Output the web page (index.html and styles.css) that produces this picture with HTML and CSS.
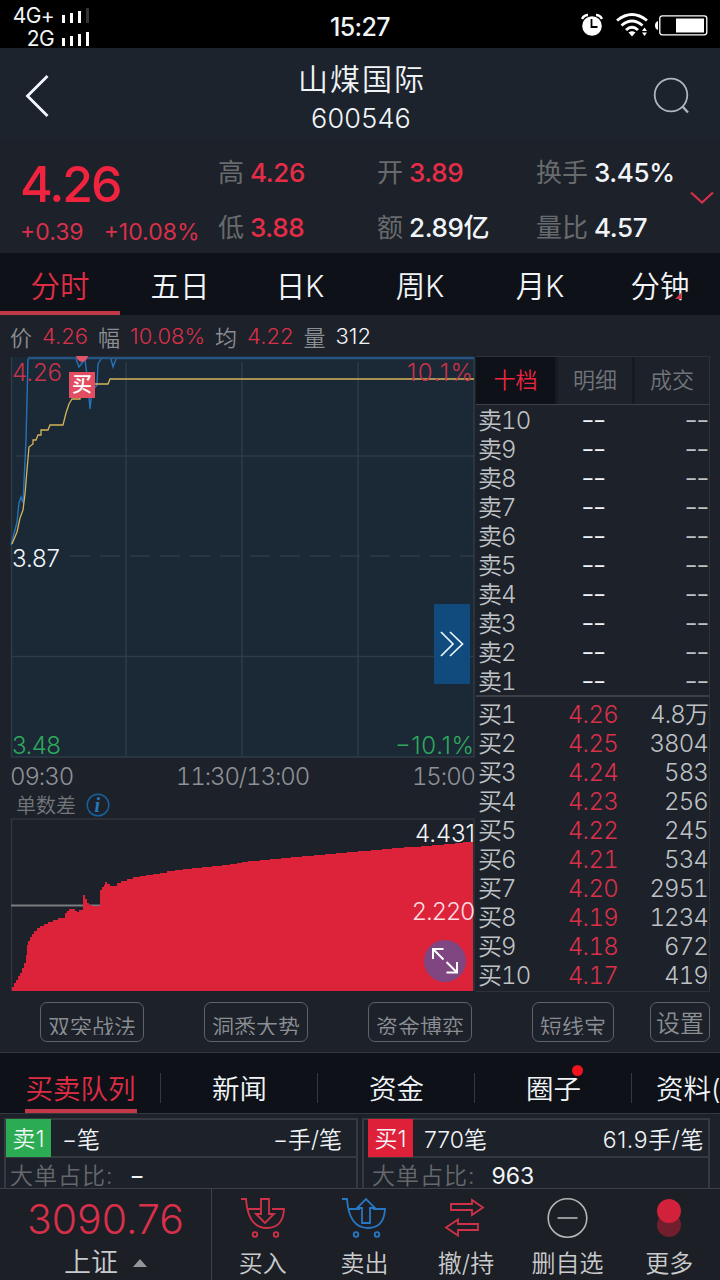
FILE: index.html
```html
<!DOCTYPE html>
<html lang="zh-CN">

<head>
    <meta charset="utf-8">
    <meta name="viewport" content="width=device-width, initial-scale=1">
    <title>山煤国际 600546</title>
    <link rel="stylesheet" href="styles.css">
</head>

<body>

    <div class="status">
        <div class="signals">
            <div class="signal">
                <span>4G+</span>
                <svg width="28" height="15"><path fill="#fff" d="M0 7h3v8h-3zM8 5h3v10h-3zM16 3h3v12h-3z"/><path fill="#333" d="M24 0h3v15h-3z"/></svg>
            </div>
            <div class="signal">
                <span>2G</span>
                <svg width="28" height="15"><path fill="#fff" d="M0 7h3v8h-3zM8 5h3v10h-3zM16 3h3v12h-3zM24 1h3v14h-3z"/></svg>
            </div>
        </div>
        <div class="clock">15:27</div>
        <div class="status_icons">
            <svg width="22" height="24" viewBox="0 0 22 24">
                <path d="M1 6Q3 2 7 2M15 2Q19 2 21 6" fill="none" stroke="#fff" stroke-width="2.4"/>
                <circle cx="11" cy="13" r="9.8" fill="#fff"/>
                <path d="M10.500 6v8h6" fill="none" stroke="#000" stroke-width="1.800"/>
            </svg>
            <svg class="wifi" width="32" height="24" viewBox="0 0 32 24">
                <path d="M1 7.500Q16 -4.500 31 7.500M5.500 12.500Q16 3.500 26.500 12.500M10 17Q16 11.500 22 17" fill="none" stroke="#fff" stroke-width="2.800"/>
                <path d="M12.500 19.500Q16 17 19.500 19.500L16 23.500zM26 18l2.500-3.500 2.500 3.500zM26 19.500h5l-2.500 3.500z" fill="#fff"/>
            </svg>
            <svg class="battery" width="53" height="21" viewBox="0 0 53 21">
                <rect x="4.800" y=".8" width="47" height="19" rx="2.500" fill="none" stroke="#fff" stroke-width="1.300"/>
                <path d="M3 6v9Q0 14 0 10.500T3 6zM21 3.500h28v14h-28z" fill="#fff"/>
            </svg>
        </div>
    </div>

    <div class="header">
        <svg width="30" height="48" viewBox="0 0 30 48"><path d="M25.500 4L5.500 24l20 20" fill="none" stroke="#f2f8fb" stroke-width="2.800"/></svg>
        <div class="title">
            <div class="stock_name">山煤国际</div>
            <div class="stock_code">600546</div>
        </div>
        <svg width="38" height="38" viewBox="0 0 38 38"><path d="M29.500 29.500l5.500 6" stroke="#aeb6bc" stroke-width="2.400"/><circle cx="18" cy="18" r="16.300" fill="none" stroke="#aeb6bc" stroke-width="1.800"/></svg>
    </div>

    <div class="quote">
        <div class="price">
            <div class="last">4.26</div>
            <div class="change"><span>+0.39</span><span>+10.08%</span></div>
        </div>
        <div class="stat">高<b class="red">4.26</b></div>
        <div class="stat">开<b class="red">3.89</b></div>
        <div class="stat">换手<b>3.45%</b></div>
        <div class="stat">低<b class="red">3.88</b></div>
        <div class="stat">额<b>2.89亿</b></div>
        <div class="stat">量比<b>4.57</b></div>
        <svg class="expand" width="26" height="14"><path d="M1 1.500l11 10 11-10" fill="none" stroke="#d8304a" stroke-width="2.200"/></svg>
    </div>

    <div class="period">
        <div class="active">分时</div>
        <div>五日</div>
        <div>日K</div>
        <div>周K</div>
        <div>月K</div>
        <div>分钟<i class="corner"></i></div>
    </div>

    <div class="info">
        <span>价</span><span class="red">4.26</span><span>幅</span><span class="red">10.08%</span><span>均</span><span class="red">4.22</span><span>量</span><span class="white">312</span>
    </div>

    <div class="main">
        <div class="charts">

            <!-- intraday price, blue = price, yellow = average -->
            <svg class="chart" width="466" height="402" viewBox="10 356 466 402">
                <rect x="11" y="357" width="463" height="400" fill="#1b2836"/>
                <g stroke="#2f3b46" stroke-width="1.500">
                    <path d="M11.500 357v400M126 362v395M242 362v395M358 362v395M474 357v400"/>
                    <path d="M16 456h458M11 656.500h463M11 757h463"/>
                    <path d="M70 556h404" stroke-dasharray="20 10"/>
                </g>
                <path d="M28 358H474" stroke="#265584" stroke-width="2.500"/>
                <path d="M11 545L17 522L19 503L21 497L23 503L26 440L28 359M76 359L79 367L82 363L85 359L88 385L90 409L92 391L97 385L98 364L101 359M111 359L113 367L116 359" fill="none" stroke="#2473b9" stroke-width="1.400"/>
                <path d="M12 544L17 532L20 518L23 510L25 494L27 470L29 447L33 444V440H36L38 435H41V430H48L50 425H63L66 413L69 404L72 399H80V391L85 384H108L110 379H474" fill="none" stroke="#d5b45b" stroke-width="1.300"/>
                <path d="M76 356Q77 361 82 362Q87 361 88 356z" fill="#e35468"/>
                <rect x="69" y="372" width="26" height="26" fill="#e34d62"/>
                <text x="72" y="392" class="tag">买</text>
                <text x="12" y="381" textLength="50" class="t_red">4.26</text>
                <text x="407" y="381" textLength="66" class="t_red">10.1%</text>
                <text x="12" y="567" textLength="48" class="t_white">3.87</text>
                <text x="12" y="754" textLength="49" class="t_green">3.48</text>
                <text x="395" y="754" textLength="79" class="t_green">−10.1%</text>
                <rect x="434" y="604" width="36" height="80" fill="#114a7c"/>
                <path d="M441 632l12 12-12 12M450 632l12.500 12-12.500 12" fill="none" stroke="#e8f8ff" stroke-width="1.700"/>
            </svg>

            <div class="times"><span>09:30</span><span>11:30/13:00</span><span>15:00</span></div>

            <div class="indicator">单数差
                <svg width="24" height="24"><circle cx="12" cy="12" r="10.800" fill="none" stroke="#185e99" stroke-width="1.500"/><text x="8.500" y="18.500" class="t_info">i</text></svg>
            </div>

            <svg class="chart" width="466" height="174" viewBox="10 818 466 174">
                <path d="M11.500 991V819H474V991" fill="none" stroke="#30363d" stroke-width="1.500"/>
                <path d="M11 905.500h90" stroke="#7a7d81" stroke-width="1.800"/>
                <path d="M12 991V987H14V983H16V980H18V976H20V973H22V968H24V963H26V955H27V945H28V941H30V937H32V934H34V931H37V928H40V926H44V924H48V922H53V920H58V918H65V913H67V911H69V909H75V911H77V912H79V910H83V895H85V899H87V903H89V905H92V906H100V890H102V887H104V885H105V882H107V884H110V886H117V883H121V881H127V879H133V877H140V876H146V875H153V874H160V873H167V871H175V870H183V869H192V868H202V867H212V866H222V865H230V864H237V863H242V862H248V861H260V860H270V859H281V858H291V857H302V856H314V855H325V854H336V853H347V852H358V851H371V850H382V849H392V848H404V847H421V846H432V845H444V844H455V843H463V842H473V991z" fill="#dc233a"/>
                <text x="415" y="842" textLength="60" class="t_white">4.431</text>
                <text x="412" y="920" textLength="63" class="t_pink">2.220</text>
                <circle cx="445" cy="961" r="21" fill="#7f4681"/>
                <path d="M443.500 959.500L433 949M433 959V949h10.500M446.500 962l10 10M457 962v10.500h-10.500" fill="none" stroke="#fff" stroke-width="2"/>
            </svg>
        </div>

        <div class="book">
            <div class="book_tabs"><div class="active">十档</div><div>明细</div><div>成交</div></div>
            <div class="sell">
                <div class="row"><span>卖10</span><span>−−</span><span>−−</span></div>
                <div class="row"><span>卖9</span><span>−−</span><span>−−</span></div>
                <div class="row"><span>卖8</span><span>−−</span><span>−−</span></div>
                <div class="row"><span>卖7</span><span>−−</span><span>−−</span></div>
                <div class="row"><span>卖6</span><span>−−</span><span>−−</span></div>
                <div class="row"><span>卖5</span><span>−−</span><span>−−</span></div>
                <div class="row"><span>卖4</span><span>−−</span><span>−−</span></div>
                <div class="row"><span>卖3</span><span>−−</span><span>−−</span></div>
                <div class="row"><span>卖2</span><span>−−</span><span>−−</span></div>
                <div class="row"><span>卖1</span><span>−−</span><span>−−</span></div>
            </div>
            <div class="buy">
                <div class="row"><span>买1</span><span>4.26</span><span>4.8万</span></div>
                <div class="row"><span>买2</span><span>4.25</span><span>3804</span></div>
                <div class="row"><span>买3</span><span>4.24</span><span>583</span></div>
                <div class="row"><span>买4</span><span>4.23</span><span>256</span></div>
                <div class="row"><span>买5</span><span>4.22</span><span>245</span></div>
                <div class="row"><span>买6</span><span>4.21</span><span>534</span></div>
                <div class="row"><span>买7</span><span>4.20</span><span>2951</span></div>
                <div class="row"><span>买8</span><span>4.19</span><span>1234</span></div>
                <div class="row"><span>买9</span><span>4.18</span><span>672</span></div>
                <div class="row"><span>买10</span><span>4.17</span><span>419</span></div>
            </div>
        </div>
    </div>

    <div class="tools">
        <button><span>双突战法</span></button>
        <button><span>洞悉大势</span></button>
        <button><span>资金博弈</span></button>
        <button class="short"><span>短线宝</span></button>
        <button class="settings">设置</button>
    </div>

    <div class="sections">
        <div class="active"><span>买卖队列</span></div>
        <div>新闻</div>
        <div>资金</div>
        <div><span class="dot">圈子</span></div>
        <div class="cut">资料(F10)</div>
    </div>

    <div class="queue">
        <div class="side side_sell">
            <div class="queue_top"><span class="badge green_bg">卖1</span><span>−笔</span><span class="avg">−手/笔</span></div>
            <div class="queue_sub">大单占比:<span>−</span></div>
        </div>
        <div class="side side_buy">
            <div class="queue_top"><span class="badge red_bg">买1</span><span>770笔</span><span class="avg">61.9手/笔</span></div>
            <div class="queue_sub">大单占比:<span>963</span></div>
        </div>
    </div>

    <div class="bottom">
        <div class="index">
            <div class="index_value">3090.76</div>
            <div class="index_name">上证<i class="up"></i></div>
        </div>
        <div class="action">
            <svg width="44" height="42" viewBox="0 0 44 42" fill="none" stroke="#cf3248" stroke-width="1.800">
                <path d="M1 2h5q2 29 21 29 16 0 17-19h-12M8 12h12" transform="translate(-1 0)"/>
                <path d="M20 2h8v15h5l-9 9-9-9h5z"/>
                <circle cx="14" cy="37.500" r="2.300"/><circle cx="35" cy="37.500" r="2.300"/>
            </svg>
            买入
        </div>
        <div class="action">
            <svg width="44" height="42" viewBox="0 0 44 42" fill="none" stroke="#2777c4" stroke-width="1.800">
                <path d="M1 2h5q2 29 21 29 16 0 17-19h-12M8 12h11" transform="translate(-1 0)"/>
                <path d="M20 26V11h-5l9-9 9 9h-5v15z"/>
                <circle cx="14" cy="37.500" r="2.300"/><circle cx="35" cy="37.500" r="2.300"/>
            </svg>
            卖出
        </div>
        <div class="action">
            <svg width="44" height="42" viewBox="0 0 44 42" fill="none" stroke="#cf3248" stroke-width="1.800">
                <path d="M7 7h21V3l11 7.500L28 18v-5H7zM34 27H14v-4.500L2 30.500l12 8V33h20z"/>
            </svg>
            撤/持
        </div>
        <div class="action">
            <svg width="44" height="42" viewBox="0 0 44 42" fill="none" stroke="#b3b5b7" stroke-width="1.600">
                <circle cx="21.500" cy="21" r="19.300"/><path d="M11.500 21h20"/>
            </svg>
            删自选
        </div>
        <div class="action">
            <svg width="44" height="42" viewBox="0 0 44 42">
                <circle cx="22" cy="28" r="12" fill="#711f2c"/><circle cx="22" cy="14" r="12" fill="#d2213a"/>
            </svg>
            更多
        </div>
    </div>

</body>

</html>
```

FILE: styles.css
```css
* {
    box-sizing: border-box;
}

body {
    margin: 0;
    width: 720px;
    height: 1280px;
    overflow: hidden;
    background: #1d2129;
    color: #f1f5f8;
    font-family: Inter, "Noto Sans CJK SC", sans-serif;
    font-size: 24px;
    font-weight: 350;
    white-space: nowrap;
}

svg {
    display: block;
    flex: none;
    overflow: visible;
}

.red {
    color: #d8304a;
}

.white {
    color: #f1f5f8;
}

/* status bar */

.status {
    height: 48px;
    background: #000;
    display: grid;
    grid-template-columns: 240px 1fr 240px;
    align-items: center;
}

.signals {
    width: 90px;
    padding-top: 4px;
    font-size: 21px;
    font-weight: 400;
    line-height: 23px;
    letter-spacing: -0.6px;
}

.signal {
    display: flex;
    justify-content: flex-end;
    align-items: center;
    gap: 8px;
}

.clock {
    text-align: center;
    font-size: 25px;
    font-weight: 500;
    letter-spacing: -0.6px;
    padding-top: 3px;
}

.status_icons {
    display: flex;
    justify-content: flex-end;
    align-items: center;
    padding-right: 12px;
}

.wifi {
    margin-left: 13px;
}

.battery {
    margin-left: 7px;
}

/* header */

.header {
    height: 92px;
    background: #1d232d;
    display: flex;
    justify-content: space-between;
    align-items: center;
    padding: 4px 29px 0 22px;
}

.title {
    text-align: center;
    padding: 4px 0 0 17px;
}

.stock_name {
    font-size: 30px;
    letter-spacing: 2px;
    line-height: 42px;
    padding-left: 2px;
}

.stock_code {
    font-size: 27px;
    line-height: 38px;
    letter-spacing: 0.2px;
}

/* quote */

.quote {
    height: 113px;
    display: grid;
    grid-template-columns: 198px 159px 159px 154px 26px;
    grid-template-rows: 55px 55px;
    padding: 3px 0 0 20px;
    align-items: center;
}

.price {
    grid-row: 1 / 3;
    color: #f0243f;
}

.last {
    font-size: 50px;
    font-weight: 500;
    line-height: 60px;
    letter-spacing: -2px;
    padding-top: 4px;
}

.change {
    display: flex;
    gap: 20px;
    color: #d8304a;
    font-size: 23px;
    font-weight: 400;
    line-height: 30px;
    padding-top: 3px;
}

.stat {
    color: #686b6d;
    font-size: 26px;
    font-weight: 400;
}

.stat b {
    color: #f1f5f8;
    font-weight: 500;
    margin-left: 6px;
    letter-spacing: -0.4px;
}

.stat .red {
    color: #e62d48;
}

.expand {
    grid-column: 5;
    grid-row: 1 / 3;
}

.period {
    height: 62px;
    background: #0e1218;
    display: grid;
    grid-template-columns: repeat(6, 1fr);
    font-size: 29.5px;
    text-align: center;
    line-height: 67px;
}

.period div {
    height: 62px;
    position: relative;
}

.period .active {
    color: #e02d45;
    border-bottom: 4px solid #c23846;
}

.corner {
    position: absolute;
    right: 39px;
    bottom: 16px;
    border-left: 6px solid transparent;
    border-bottom: 6px solid #d8304a;
}

.info {
    height: 41px;
    padding: 1px 10px 0;
    display: flex;
    align-items: center;
    gap: 10px;
    color: #8b8f94;
    font-size: 22px;
}

/* charts */

.main {
    height: 636px;
    display: flex;
}

.charts {
    width: 476px;
    padding-left: 10px;
}

.chart {
    font-size: 24px;
}

.tag {
    fill: #fff;
    font-size: 20px;
    font-weight: 500;
}

.t_red {
    fill: #c73349;
}

.t_white {
    fill: #f1f5f8;
}

.t_green {
    fill: #2ea85a;
}

.t_pink {
    fill: #ffdce0;
}

.t_info {
    fill: #2478bf;
    font: italic bold 20px "Liberation Serif", serif;
}

.times {
    height: 36px;
    display: flex;
    justify-content: space-between;
    align-items: center;
    color: #8e9297;
    font-variant-numeric: tabular-nums;
    letter-spacing: -1.1px;
    padding-right: 1px;
}

.indicator {
    height: 24px;
    padding-left: 6px;
    display: flex;
    align-items: center;
    gap: 10px;
    color: #73777b;
    font-size: 20px;
    line-height: 22px;
}

.indicator svg {
    margin-top: -2px;
}

/* order book */

.book {
    width: 234px;
    border: 1px solid #2d3239;
    border-width: 1px 1px 1px 0;
    color: #bfc2c5;
}

.book_tabs {
    height: 48px;
    display: grid;
    grid-template-columns: 79px 74px 74px;
    gap: 3px;
    background: #161a21;
    border-bottom: 1px solid #3c4147;
    color: #70757a;
    font-size: 22px;
    line-height: 47px;
    text-align: center;
}

.book_tabs div {
    height: 47px;
    background: #1d2129;
}

.book_tabs .active {
    background: #0e1218;
    color: #f0243f;
}

.sell {
    height: 292px;
    padding-top: 1px;
    border-bottom: 2px solid #3c4147;
}

.buy {
    padding-top: 3px;
}

.row {
    height: 29px;
    line-height: 29px;
    display: grid;
    grid-template-columns: 80px 70px 80px;
    padding-left: 2px;
    font-variant-numeric: tabular-nums;
    letter-spacing: -0.9px;
}

.row span:nth-child(2) {
    text-align: center;
}

.row span:nth-child(3) {
    text-align: right;
}

.buy span:nth-child(2) {
    color: #d8304a;
    letter-spacing: -0.6px;
}

.sell span:nth-child(n+2) {
    font-size: 20px;
    font-weight: 400;
    line-height: 28px;
    font-variant-numeric: normal;
    letter-spacing: -1.5px;
}

.sell span:nth-child(2) {
    color: #f1f5f8;
}

/* strategy buttons */

.tools {
    height: 61px;
    display: flex;
    padding: 10px 10px 0 40px;
    border-bottom: 1px solid #343940;
}

button {
    width: 104px;
    height: 40px;
    margin: 0 60px 0 0;
    padding: 0;
    background: none;
    border: 1px solid #5f6368;
    border-radius: 7px;
    color: #8b8f94;
    font-family: inherit;
    font-size: 22px;
    font-weight: 350;
    flex: none;
}

button span {
    display: block;
    height: 20px;
    margin-top: 5px;
    line-height: 24px;
    overflow: hidden;
}

.short {
    width: 82px;
    margin-right: 36px;
}

.settings {
    width: 60px;
    margin: 0;
    font-size: 24px;
    line-height: 38px;
    padding-top: 2px;
}

/* sections */

.sections {
    height: 61px;
    background: #0e1218;
    display: flex;
    line-height: 73px;
    font-size: 27.5px;
    border-bottom: 1px solid #343940;
    overflow: hidden;
}

.sections > div {
    width: 157px;
    flex: none;
    text-align: center;
    background: linear-gradient(#343940, #343940) no-repeat right 20px / 1px 30px;
}

.sections > .active {
    width: 161px;
    color: #e02d45;
}

.sections .active span {
    display: inline-block;
    height: 60px;
    padding: 0 1px;
    border-bottom: 4px solid #c23846;
}

.sections > .cut {
    text-align: left;
    padding-left: 24px;
    background: none;
}

.dot {
    position: relative;
}

.dot::after {
    content: "";
    position: absolute;
    top: -7px;
    right: -2px;
    width: 11px;
    height: 11px;
    border-radius: 50%;
    background: #f01420;
}

/* queue */

.queue {
    height: 74px;
    display: flex;
    padding: 4px 0 0 4px;
    overflow: hidden;
}

.side {
    width: 354px;
    height: 80px;
    border: 2px solid #353a41;
    flex: none;
}

.side_buy {
    width: 348px;
    margin-left: 4px;
    padding-left: 4px;
}

.queue_top {
    height: 38px;
    display: flex;
    align-items: center;
    gap: 11px;
    font-size: 23px;
    border-bottom: 2px solid #353a41;
}

.badge {
    width: 45px;
    height: 38px;
    line-height: 40px;
    text-align: center;
}

.green_bg {
    background: #2bac52;
}

.red_bg {
    background: #df2039;
}

.avg {
    margin-left: auto;
    padding-right: 14px;
}

.side_buy .avg {
    padding-right: 4px;
    letter-spacing: 0.6px;
}

.queue_sub {
    color: #65696d;
    font-size: 23px;
    line-height: 37px;
    padding-left: 4px;
    letter-spacing: 1px;
}

.queue_sub span {
    color: #f1f5f8;
    font-weight: 400;
    letter-spacing: 0;
    margin-left: 16px;
}

/* bottom bar */

.bottom {
    height: 92px;
    background: #1c1f25;
    border-top: 1px solid #3c4147;
    display: grid;
    grid-template-columns: 212px repeat(5, 1fr);
    text-align: center;
    color: #c9cbcd;
}

.index {
    border-right: 1px solid #3c4147;
}

.index_value {
    color: #d8304a;
    font-size: 41px;
    line-height: 60px;
}

.index_name {
    font-size: 27px;
    line-height: 28px;
    display: flex;
    justify-content: center;
    align-items: center;
    gap: 15px;
}

.up {
    border: 7px solid transparent;
    border-top: 0;
    border-bottom: 8px solid #94979a;
}

.action {
    display: flex;
    flex-direction: column;
    align-items: center;
    padding-top: 8px;
    font-size: 24px;
    line-height: 49px;
}
```
